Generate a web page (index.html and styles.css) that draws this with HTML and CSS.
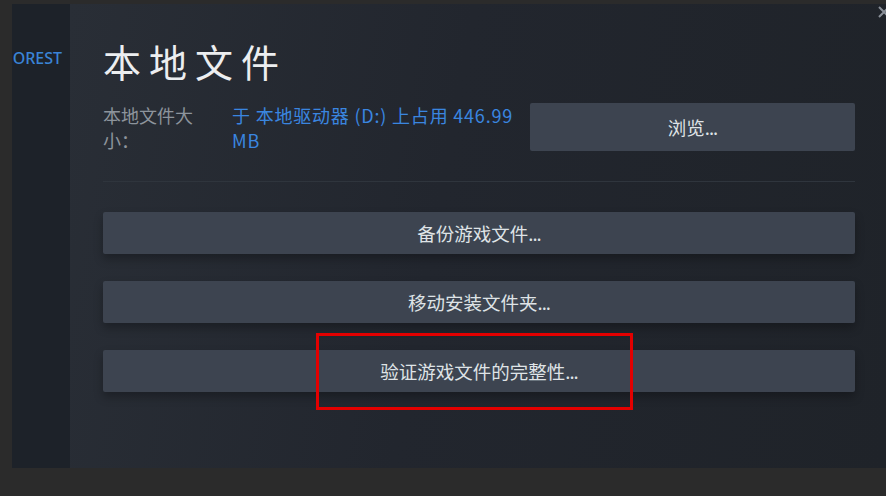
FILE: index.html
```html
<!DOCTYPE html>
<html lang="zh-CN">
<head>
<meta charset="utf-8">
<title>本地文件</title>
<link rel="stylesheet" href="styles.css">
</head>
<body>
<div class="frame">
  <aside class="sidebar">
    <div class="game-name">OREST</div>
  </aside>
  <main class="panel">
    <svg class="close" width="12" height="12" viewBox="0 0 12 12"><path d="M1 1 L11 11 M11 1 L1 11" stroke="#8a9099" stroke-width="2" fill="none"/></svg>
    <h1 class="title">本地文件</h1>
    <div class="info-row">
      <div class="label">本地文件大小：</div>
      <div class="value">于 本地驱动器 (D:) 上占用 446.99 MB</div>
      <button class="btn browse">浏览<span class="dots">...</span></button>
    </div>
    <div class="separator"></div>
    <div class="actions">
      <button class="btn action">备份游戏文件<span class="dots">...</span></button>
      <button class="btn action">移动安装文件夹<span class="dots">...</span></button>
      <button class="btn action">验证游戏文件的完整性<span class="dots">...</span></button>
    </div>
    <div class="highlight"></div>
  </main>
</div>
</body>
</html>
```

FILE: styles.css
```css
html, body {
  margin: 0;
  padding: 0;
}
body {
  width: 886px;
  height: 496px;
  background: #2b2b2b;
  overflow: hidden;
  font-family: "Noto Sans CJK SC", "Noto Sans", sans-serif;
}
.frame {
  display: flex;
  margin: 4px 0 0 12px;
  height: 464px;
}
.sidebar {
  width: 58px;
  flex: none;
  background: #1d2229;
  overflow: hidden;
}
.game-name {
  display: flex;
  justify-content: flex-end;
  padding-right: 8px;
  margin-top: 44px;
  white-space: nowrap;
  font-family: "Noto Sans", "Liberation Sans", sans-serif;
  font-size: 16px;
  font-weight: 500;
  line-height: 20px;
  color: #3a84d6;
}
.panel {
  position: relative;
  flex: 1;
  background: linear-gradient(100deg, #292e36 0%, #22262e 45%, #1f2329 100%);
  padding: 34px 31px 0 33px;
}
.close {
  position: absolute;
  left: 808px;
  top: 2px;
}
.title {
  margin: 0;
  font-size: 38px;
  font-weight: 400;
  line-height: 46px;
  letter-spacing: 8px;
  color: #eceef0;
}
.info-row {
  display: flex;
  align-items: flex-start;
  margin-top: 19px;
}
.label {
  width: 96px;
  flex: none;
  font-size: 18px;
  line-height: 25px;
  color: #8d949c;
}
.value {
  width: 292px;
  flex: none;
  margin-left: 33px;
  font-size: 18px;
  line-height: 25px;
  letter-spacing: 0.8px;
  color: #3a86e0;
}
.btn {
  border: none;
  border-radius: 2px;
  background: #3d4450;
  color: #dfe3e6;
  font-family: "Noto Sans CJK SC", "Noto Sans", sans-serif;
  font-size: 18.5px;
  padding: 0;
}
.dots {
  letter-spacing: -1px;
}
.browse {
  flex: 1;
  margin-left: 6px;
  height: 48px;
}
.separator {
  height: 1px;
  background: #2f353d;
  margin-top: 28px;
}
.actions {
  display: flex;
  flex-direction: column;
  gap: 27px;
  margin-top: 30px;
}
.action {
  height: 42px;
  box-shadow: 0 5px 10px rgba(0, 0, 0, 0.28);
}
.highlight {
  position: absolute;
  left: 246px;
  top: 329px;
  width: 311px;
  height: 71px;
  border: 3px solid #e30000;
}
```
